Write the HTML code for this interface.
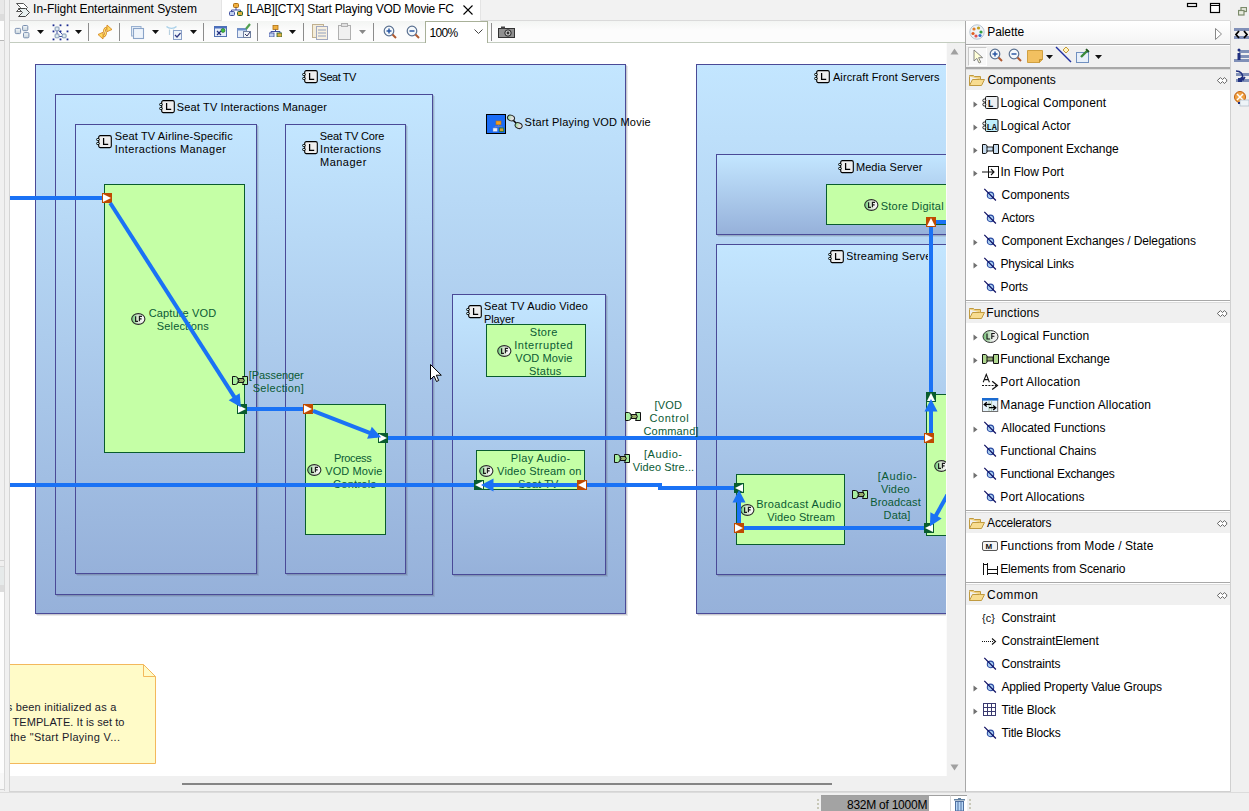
<!DOCTYPE html>
<html><head><meta charset="utf-8">
<style>
*{box-sizing:border-box;margin:0;padding:0}
html,body{width:1249px;height:811px;overflow:hidden;background:#f0f0f0;font-family:"Liberation Sans",sans-serif;font-size:12px;color:#000}
.a{position:absolute}
#canvas{position:absolute;left:0;top:0;width:946px;height:776px;overflow:hidden;clip-path:inset(43px 0 0 10px)}
#canvas .bg{position:absolute;left:10px;top:43px;width:937px;height:733px;background:#fff}
.cont{position:absolute;border:1px solid #4a4a97;background:linear-gradient(#c3e6ff,#96b1da);box-shadow:1px 1px 0 rgba(70,70,90,.2),2px 2px 0 rgba(70,70,90,.12)}
.fn{position:absolute;border:1px solid #095c2e;background:#c5ffa6}
.dt{position:absolute;white-space:nowrap;letter-spacing:-0.35px;line-height:13px;font-size:11px}
.pt{position:absolute;white-space:nowrap;line-height:23px}
</style></head><body>
<!-- left strip -->
<div class="a" style="left:0;top:0;width:4px;height:14px;background:#e8e8e8"></div>
<div class="a" style="left:0;top:14px;width:4px;height:7px;background:#dcdcdc"></div>
<div class="a" style="left:0;top:21px;width:4px;height:20px;background:#fdfdfd;border-bottom:1px solid #b8b8b8"></div>
<div class="a" style="left:0;top:560px;width:4px;height:1px;background:#d4d4d4"></div>
<div class="a" style="left:0;top:566px;width:4px;height:19px;background:#e6eaea;border-top:1px solid #d8d8d8"></div>
<div class="a" style="left:0;top:585px;width:4px;height:7px;background:#dcdcdc"></div>
<div class="a" style="left:0;top:592px;width:4px;height:181px;background:#fdfdfd"></div>
<div class="a" style="left:0;top:773px;width:4px;height:17px;background:#f8f8f8;border-bottom:1px solid #d4d4d4"></div>
<div class="a" style="left:4px;top:0;width:1px;height:791px;background:#d8d8d8"></div>
<div class="a" style="left:9px;top:0;width:1px;height:792px;background:#d4d4d4"></div>
<!-- tab bar -->
<div class="a" style="left:10px;top:0;width:1220px;height:20px;background:#f2f2f2"></div>
<div class="a" style="left:10px;top:20px;width:1220px;height:1px;background:#dadada"></div>
<!-- toolbar -->
<div class="a" style="left:10px;top:21px;width:955px;height:22px;background:linear-gradient(#f3f5f3,#fcfcfc 45%,#fcfcfc);border-bottom:1px solid #c3ccbf"></div>
<div id="canvas"><div class="bg"></div>
<div id="dia"><div class="cont" style="left:35px;top:64px;width:591px;height:550px;"></div><div class="cont" style="left:55px;top:94px;width:378px;height:501px;"></div><div class="cont" style="left:75px;top:124px;width:182px;height:450px;"></div><div class="cont" style="left:285px;top:124px;width:121px;height:450px;"></div><div class="cont" style="left:452px;top:294px;width:154px;height:281px;"></div><div class="cont" style="left:696px;top:64px;width:305px;height:550px;"></div><div class="cont" style="left:716px;top:154px;width:285px;height:81px;"></div><div class="cont" style="left:716px;top:244px;width:285px;height:331px;"></div><svg class="a" style="left:302px;top:70px" width="17" height="14" viewBox="0 0 17 14"><rect x="2.7" y="0.6" width="12.6" height="12" rx="1.6" fill="#eeeeee" stroke="#000" stroke-width="1.1"/><ellipse cx="1.9" cy="4.5" rx="1.5" ry="1.05" fill="#dff" stroke="#000" stroke-width="0.9"/><ellipse cx="1.9" cy="8.5" rx="1.5" ry="1.05" fill="#dff" stroke="#000" stroke-width="0.9"/><path d="M7.6 3v6.4h4.6" fill="none" stroke="#000" stroke-width="1.25"/></svg><svg class="a" style="left:159px;top:100px" width="17" height="14" viewBox="0 0 17 14"><rect x="2.7" y="0.6" width="12.6" height="12" rx="1.6" fill="#eeeeee" stroke="#000" stroke-width="1.1"/><ellipse cx="1.9" cy="4.5" rx="1.5" ry="1.05" fill="#dff" stroke="#000" stroke-width="0.9"/><ellipse cx="1.9" cy="8.5" rx="1.5" ry="1.05" fill="#dff" stroke="#000" stroke-width="0.9"/><path d="M7.6 3v6.4h4.6" fill="none" stroke="#000" stroke-width="1.25"/></svg><svg class="a" style="left:96px;top:135px" width="17" height="14" viewBox="0 0 17 14"><rect x="2.7" y="0.6" width="12.6" height="12" rx="1.6" fill="#eeeeee" stroke="#000" stroke-width="1.1"/><ellipse cx="1.9" cy="4.5" rx="1.5" ry="1.05" fill="#dff" stroke="#000" stroke-width="0.9"/><ellipse cx="1.9" cy="8.5" rx="1.5" ry="1.05" fill="#dff" stroke="#000" stroke-width="0.9"/><path d="M7.6 3v6.4h4.6" fill="none" stroke="#000" stroke-width="1.25"/></svg><svg class="a" style="left:302px;top:141px" width="17" height="14" viewBox="0 0 17 14"><rect x="2.7" y="0.6" width="12.6" height="12" rx="1.6" fill="#eeeeee" stroke="#000" stroke-width="1.1"/><ellipse cx="1.9" cy="4.5" rx="1.5" ry="1.05" fill="#dff" stroke="#000" stroke-width="0.9"/><ellipse cx="1.9" cy="8.5" rx="1.5" ry="1.05" fill="#dff" stroke="#000" stroke-width="0.9"/><path d="M7.6 3v6.4h4.6" fill="none" stroke="#000" stroke-width="1.25"/></svg><svg class="a" style="left:466px;top:305px" width="17" height="14" viewBox="0 0 17 14"><rect x="2.7" y="0.6" width="12.6" height="12" rx="1.6" fill="#eeeeee" stroke="#000" stroke-width="1.1"/><ellipse cx="1.9" cy="4.5" rx="1.5" ry="1.05" fill="#dff" stroke="#000" stroke-width="0.9"/><ellipse cx="1.9" cy="8.5" rx="1.5" ry="1.05" fill="#dff" stroke="#000" stroke-width="0.9"/><path d="M7.6 3v6.4h4.6" fill="none" stroke="#000" stroke-width="1.25"/></svg><svg class="a" style="left:814px;top:70px" width="17" height="14" viewBox="0 0 17 14"><rect x="2.7" y="0.6" width="12.6" height="12" rx="1.6" fill="#eeeeee" stroke="#000" stroke-width="1.1"/><ellipse cx="1.9" cy="4.5" rx="1.5" ry="1.05" fill="#dff" stroke="#000" stroke-width="0.9"/><ellipse cx="1.9" cy="8.5" rx="1.5" ry="1.05" fill="#dff" stroke="#000" stroke-width="0.9"/><path d="M7.6 3v6.4h4.6" fill="none" stroke="#000" stroke-width="1.25"/></svg><svg class="a" style="left:838px;top:160px" width="17" height="14" viewBox="0 0 17 14"><rect x="2.7" y="0.6" width="12.6" height="12" rx="1.6" fill="#eeeeee" stroke="#000" stroke-width="1.1"/><ellipse cx="1.9" cy="4.5" rx="1.5" ry="1.05" fill="#dff" stroke="#000" stroke-width="0.9"/><ellipse cx="1.9" cy="8.5" rx="1.5" ry="1.05" fill="#dff" stroke="#000" stroke-width="0.9"/><path d="M7.6 3v6.4h4.6" fill="none" stroke="#000" stroke-width="1.25"/></svg><svg class="a" style="left:828px;top:250px" width="17" height="14" viewBox="0 0 17 14"><rect x="2.7" y="0.6" width="12.6" height="12" rx="1.6" fill="#eeeeee" stroke="#000" stroke-width="1.1"/><ellipse cx="1.9" cy="4.5" rx="1.5" ry="1.05" fill="#dff" stroke="#000" stroke-width="0.9"/><ellipse cx="1.9" cy="8.5" rx="1.5" ry="1.05" fill="#dff" stroke="#000" stroke-width="0.9"/><path d="M7.6 3v6.4h4.6" fill="none" stroke="#000" stroke-width="1.25"/></svg><div class="fn" style="left:104px;top:184px;width:141px;height:269px;"></div><div class="fn" style="left:305px;top:404px;width:81px;height:131px;"></div><div class="fn" style="left:486px;top:324px;width:100px;height:53px;"></div><div class="fn" style="left:476px;top:450px;width:109px;height:40px;overflow:hidden"></div><div class="fn" style="left:826px;top:184px;width:175px;height:41px;"></div><div class="fn" style="left:736px;top:474px;width:109px;height:71px;"></div><div class="fn" style="left:926px;top:394px;width:75px;height:142px;"></div><svg class="a" style="left:130.6px;top:313px" width="16" height="13" viewBox="0 0 16 13"><defs><linearGradient id="lfg130313" x1="0" x2="1"><stop offset="0.15" stop-color="#88d890"/><stop offset=".45" stop-color="#d8e8d0"/><stop offset=".8" stop-color="#f4f4f4"/></linearGradient></defs><ellipse cx="7.3" cy="6" rx="6.6" ry="5.4" fill="url(#lfg130313)" stroke="#2a2a2a" stroke-width="1.1"/><path d="M4.6 3.3v5h2.4M8.4 8.3v-5h2.6M8.4 5.8h2.2" fill="none" stroke="#1a1a1a" stroke-width="1.15"/></svg><svg class="a" style="left:306.6px;top:464px" width="16" height="13" viewBox="0 0 16 13"><defs><linearGradient id="lfg306464" x1="0" x2="1"><stop offset="0.15" stop-color="#88d890"/><stop offset=".45" stop-color="#d8e8d0"/><stop offset=".8" stop-color="#f4f4f4"/></linearGradient></defs><ellipse cx="7.3" cy="6" rx="6.6" ry="5.4" fill="url(#lfg306464)" stroke="#2a2a2a" stroke-width="1.1"/><path d="M4.6 3.3v5h2.4M8.4 8.3v-5h2.6M8.4 5.8h2.2" fill="none" stroke="#1a1a1a" stroke-width="1.15"/></svg><svg class="a" style="left:496.6px;top:345px" width="16" height="13" viewBox="0 0 16 13"><defs><linearGradient id="lfg496345" x1="0" x2="1"><stop offset="0.15" stop-color="#88d890"/><stop offset=".45" stop-color="#d8e8d0"/><stop offset=".8" stop-color="#f4f4f4"/></linearGradient></defs><ellipse cx="7.3" cy="6" rx="6.6" ry="5.4" fill="url(#lfg496345)" stroke="#2a2a2a" stroke-width="1.1"/><path d="M4.6 3.3v5h2.4M8.4 8.3v-5h2.6M8.4 5.8h2.2" fill="none" stroke="#1a1a1a" stroke-width="1.15"/></svg><svg class="a" style="left:478.6px;top:465px" width="16" height="13" viewBox="0 0 16 13"><defs><linearGradient id="lfg478465" x1="0" x2="1"><stop offset="0.15" stop-color="#88d890"/><stop offset=".45" stop-color="#d8e8d0"/><stop offset=".8" stop-color="#f4f4f4"/></linearGradient></defs><ellipse cx="7.3" cy="6" rx="6.6" ry="5.4" fill="url(#lfg478465)" stroke="#2a2a2a" stroke-width="1.1"/><path d="M4.6 3.3v5h2.4M8.4 8.3v-5h2.6M8.4 5.8h2.2" fill="none" stroke="#1a1a1a" stroke-width="1.15"/></svg><svg class="a" style="left:863.5px;top:199px" width="16" height="13" viewBox="0 0 16 13"><defs><linearGradient id="lfg863199" x1="0" x2="1"><stop offset="0.15" stop-color="#88d890"/><stop offset=".45" stop-color="#d8e8d0"/><stop offset=".8" stop-color="#f4f4f4"/></linearGradient></defs><ellipse cx="7.3" cy="6" rx="6.6" ry="5.4" fill="url(#lfg863199)" stroke="#2a2a2a" stroke-width="1.1"/><path d="M4.6 3.3v5h2.4M8.4 8.3v-5h2.6M8.4 5.8h2.2" fill="none" stroke="#1a1a1a" stroke-width="1.15"/></svg><svg class="a" style="left:739.8px;top:503.8px" width="16" height="13" viewBox="0 0 16 13"><defs><linearGradient id="lfg739503" x1="0" x2="1"><stop offset="0.15" stop-color="#88d890"/><stop offset=".45" stop-color="#d8e8d0"/><stop offset=".8" stop-color="#f4f4f4"/></linearGradient></defs><ellipse cx="7.3" cy="6" rx="6.6" ry="5.4" fill="url(#lfg739503)" stroke="#2a2a2a" stroke-width="1.1"/><path d="M4.6 3.3v5h2.4M8.4 8.3v-5h2.6M8.4 5.8h2.2" fill="none" stroke="#1a1a1a" stroke-width="1.15"/></svg><svg class="a" style="left:934px;top:460px" width="16" height="13" viewBox="0 0 16 13"><defs><linearGradient id="lfg934460" x1="0" x2="1"><stop offset="0.15" stop-color="#88d890"/><stop offset=".45" stop-color="#d8e8d0"/><stop offset=".8" stop-color="#f4f4f4"/></linearGradient></defs><ellipse cx="7.3" cy="6" rx="6.6" ry="5.4" fill="url(#lfg934460)" stroke="#2a2a2a" stroke-width="1.1"/><path d="M4.6 3.3v5h2.4M8.4 8.3v-5h2.6M8.4 5.8h2.2" fill="none" stroke="#1a1a1a" stroke-width="1.15"/></svg><div class="dt" style="left:319.50px;top:71px;letter-spacing:-0.433px;color:#000">Seat TV</div><div class="dt" style="left:176.80px;top:101px;letter-spacing:0.152px;color:#000">Seat TV Interactions Manager</div><div class="dt" style="left:114.80px;top:130px;letter-spacing:0.135px;color:#000">Seat TV Airline-Specific</div><div class="dt" style="left:114.80px;top:143px;letter-spacing:0.405px;color:#000">Interactions Manager</div><div class="dt" style="left:319.80px;top:130px;letter-spacing:-0.164px;color:#000">Seat TV Core</div><div class="dt" style="left:320.00px;top:143px;letter-spacing:0.373px;color:#000">Interactions</div><div class="dt" style="left:320.00px;top:156px;letter-spacing:0.483px;color:#000">Manager</div><div class="dt" style="left:483.90px;top:300px;letter-spacing:0.161px;color:#000">Seat TV Audio Video</div><div class="dt" style="left:483.90px;top:313px;letter-spacing:-0.100px;color:#000">Player</div><div class="dt" style="left:832.90px;top:71px;letter-spacing:0.105px;color:#000">Aircraft Front Servers</div><div class="dt" style="left:855.90px;top:161px;letter-spacing:0.091px;color:#000">Media Server</div><div class="dt" style="left:524.60px;top:116px;letter-spacing:0.200px;color:#000">Start Playing VOD Movie</div><div class="dt" style="left:148.80px;top:307px;letter-spacing:0.130px;color:#0b5a34">Capture VOD</div><div class="dt" style="left:156.80px;top:320px;letter-spacing:0.144px;color:#0b5a34">Selections</div><div class="dt" style="left:333.90px;top:452px;letter-spacing:-0.317px;color:#0b5a34">Process</div><div class="dt" style="left:325.20px;top:465px;letter-spacing:0.113px;color:#0b5a34">VOD Movie</div><div class="dt" style="left:333.10px;top:478px;letter-spacing:0.271px;color:#0b5a34">Controls</div><div class="dt" style="left:529.80px;top:326px;letter-spacing:0.325px;color:#0b5a34">Store</div><div class="dt" style="left:514.20px;top:339px;letter-spacing:0.530px;color:#0b5a34">Interrupted</div><div class="dt" style="left:515.20px;top:352px;letter-spacing:0.112px;color:#0b5a34">VOD Movie</div><div class="dt" style="left:529.00px;top:365px;letter-spacing:0.220px;color:#0b5a34">Status</div><div class="dt" style="left:510.70px;top:452px;letter-spacing:0.390px;color:#0b5a34">Play Audio-</div><div class="dt" style="left:497.10px;top:465px;letter-spacing:0.179px;color:#0b5a34">Video Stream on</div><div class="dt" style="left:756.20px;top:498px;letter-spacing:0.336px;color:#0b5a34">Broadcast Audio</div><div class="dt" style="left:767.20px;top:511px;letter-spacing:0.118px;color:#0b5a34">Video Stream</div><div class="a" style="left:477px;top:451px;width:107px;height:38px;overflow:hidden"><div class="dt" style="left:40.90px;top:27px;letter-spacing:0.15px;color:#0b5a34">Seat TV</div></div><div class="a" style="left:847px;top:250px;width:81px;height:14px;overflow:hidden"><div class="dt" style="left:-1.00px;top:0px;letter-spacing:0.25px">Streaming Server</div></div><div class="dt" style="left:880.70px;top:200px;letter-spacing:0.25px;color:#0b5a34">Store Digital Content</div><div class="a" style="left:486px;top:114px;width:20px;height:20px;background:#1a6cf5;border:1px solid #000"></div><svg class="a" style="left:492px;top:120px" width="13" height="13" viewBox="0 0 13 13"><rect x="4" y="1" width="5" height="3.8" fill="#f0a020" stroke="#c07010" stroke-width=".6"/><path d="M6.5 5v1.5M3 6.5h7M3 6.5v1.5M10 6.5v1.5" stroke="#7080c0" stroke-width=".7"/><rect x="1" y="8" width="4.2" height="3.5" fill="#e8f0ff" stroke="#8090c0" stroke-width=".5"/><rect x="7.5" y="8" width="4.2" height="3.5" fill="#d0a030" stroke="#207040" stroke-width=".8"/></svg><svg class="a" style="left:506px;top:114px" width="17" height="16" viewBox="0 0 17 16"><path d="M5 4l7 7" stroke="#000" stroke-width="1.5"/><defs><linearGradient id="lkg" x1="0" x2="1"><stop offset="0" stop-color="#90e090"/><stop offset=".6" stop-color="#e0e0e0"/></linearGradient></defs><ellipse cx="5" cy="4" rx="3.6" ry="2.8" fill="url(#lkg)" stroke="#222" transform="rotate(20 5 4)"/><ellipse cx="12.6" cy="11.6" rx="3.6" ry="2.8" fill="url(#lkg)" stroke="#222" transform="rotate(20 12.6 11.6)"/></svg><svg class="a" style="left:0;top:660px" width="170" height="110" viewBox="0 0 170 110"><path d="M-10 4.5H143.5L155.5 16.5V103.5H-10Z" fill="#fffbc8" stroke="#f3b85c"/><path d="M143.5 4.5V16.5H155.5" fill="none" stroke="#f3b85c"/></svg><div class="dt" style="left:6.7px;top:701px;letter-spacing:0.2px;color:#1a1a2a">s been initialized as a</div><div class="dt" style="left:12.5px;top:716px;letter-spacing:0.07px;color:#1a1a2a">TEMPLATE. It is set to</div><div class="dt" style="left:10.2px;top:731px;letter-spacing:0.3px;color:#1a1a2a">the "Start Playing V...</div></div><svg class="a" style="left:0;top:0" width="947" height="776"><rect x="102" y="193" width="10" height="10" fill="#c04a00"/><polygon points="103,194 111,198 103,202" fill="#fff"/><rect x="237" y="404" width="10" height="10" fill="#095c2e"/><polygon points="238,405 246,409 238,413" fill="#fff"/><rect x="303" y="404" width="10" height="10" fill="#c04a00"/><polygon points="304,405 312,409 304,413" fill="#fff"/><rect x="378" y="433" width="10" height="10" fill="#095c2e"/><polygon points="379,434 387,438 379,442" fill="#fff"/><rect x="577" y="480" width="10" height="10" fill="#c04a00"/><polygon points="586,481 578,485 586,489" fill="#fff"/><rect x="474" y="480" width="10" height="10" fill="#095c2e"/><polygon points="483,481 475,485 483,489" fill="#fff"/><rect x="926" y="217" width="10" height="10" fill="#c04a00"/><polygon points="927,226 931,218 935,226" fill="#fff"/><rect x="926" y="392" width="10" height="10" fill="#095c2e"/><polygon points="927,401 931,393 935,401" fill="#fff"/><rect x="924" y="433" width="10" height="10" fill="#c04a00"/><polygon points="925,434 933,438 925,442" fill="#fff"/><rect x="924" y="523" width="10" height="10" fill="#095c2e"/><polygon points="933,524 925,528 933,532" fill="#fff"/><rect x="734" y="523" width="10" height="10" fill="#c04a00"/><polygon points="735,524 743,528 735,532" fill="#fff"/><rect x="734" y="483" width="10" height="10" fill="#095c2e"/><polygon points="743,484 735,488 743,492" fill="#fff"/><line x1="10" y1="198" x2="102" y2="198" stroke="#1a72f5" stroke-width="4"/><line x1="110.2" y1="203" x2="238.76635755863057" y2="403.9459366286745" stroke="#1a72f5" stroke-width="4"/><polygon points="240.9,407.3 228.7,400.3 239.7,393.3" fill="#1a72f5"/><line x1="247" y1="409" x2="303" y2="409" stroke="#1a72f5" stroke-width="4"/><line x1="313" y1="410.9" x2="377.403781489738" y2="435.83612884269866" stroke="#1a72f5" stroke-width="4"/><polygon points="381.1,437.3 367.1,438.8 371.8,426.7" fill="#1a72f5"/><line x1="388" y1="438" x2="924" y2="438" stroke="#1a72f5" stroke-width="4"/><line x1="931" y1="433" x2="931" y2="405" stroke="#1a72f5" stroke-width="4"/><polygon points="931.0,399.0 937.5,411.5 924.5,411.5" fill="#1a72f5"/><line x1="931" y1="392" x2="931" y2="227" stroke="#1a72f5" stroke-width="4"/><line x1="936" y1="222" x2="960" y2="222" stroke="#1a72f5" stroke-width="4"/><line x1="952.2885147170198" y1="486.02804409757454" x2="931.9110643396275" y2="522.7535055121969" stroke="#1a72f5" stroke-width="4"/><polygon points="930.0,526.3 930.4,512.2 941.7,518.5" fill="#1a72f5"/><line x1="744" y1="528" x2="924" y2="528" stroke="#1a72f5" stroke-width="4"/><line x1="739" y1="523" x2="739" y2="496" stroke="#1a72f5" stroke-width="4"/><polygon points="739.0,490.0 745.5,502.5 732.5,502.5" fill="#1a72f5"/><line x1="658" y1="488" x2="734" y2="488" stroke="#1a72f5" stroke-width="4"/><line x1="587" y1="485" x2="662" y2="485" stroke="#1a72f5" stroke-width="4"/><line x1="10" y1="485" x2="474" y2="485" stroke="#1a72f5" stroke-width="4"/><line x1="487" y1="485" x2="577" y2="485" stroke="#1a72f5" stroke-width="4"/><polygon points="481.0,485.0 493.5,478.5 493.5,491.5" fill="#1a72f5"/></svg><div class="dt" style="left:248.80px;top:369px;letter-spacing:-0.078px;color:#0b5a34">[Passenger</div><div class="dt" style="left:252.70px;top:382px;letter-spacing:0.300px;color:#0b5a34">Selection]</div><div class="dt" style="left:654.50px;top:399px;letter-spacing:0.200px;color:#0b5a34">[VOD</div><div class="dt" style="left:649.40px;top:412px;letter-spacing:0.633px;color:#0b5a34">Control</div><div class="dt" style="left:643.50px;top:425px;letter-spacing:0.171px;color:#0b5a34">Command]</div><div class="dt" style="left:644.00px;top:448px;letter-spacing:0.517px;color:#0b5a34">[Audio-</div><div class="dt" style="left:632.80px;top:461px;letter-spacing:0.083px;color:#0b5a34">Video Stre...</div><div class="dt" style="left:877.70px;top:470px;letter-spacing:0.683px;color:#0b5a34">[Audio-</div><div class="dt" style="left:880.90px;top:483px;letter-spacing:0.200px;color:#0b5a34">Video</div><div class="dt" style="left:870.30px;top:496px;letter-spacing:0.113px;color:#0b5a34">Broadcast</div><div class="dt" style="left:883.60px;top:509px;letter-spacing:0.125px;color:#0b5a34">Data]</div><svg class="a" style="left:232px;top:376px" width="16" height="9" viewBox="0 0 16 9"><path d="M6 2.5H11L12.5 4.5L11 6.5H6L7 4.5Z" fill="#9aad6a" stroke="#111" stroke-width="1"/><path d="M0.5 0.5H3.5Q6.3 0.5 6.3 4.5Q6.3 8.5 3.5 8.5H0.5Z" fill="#a8eea0" stroke="#111" stroke-width="1"/><path d="M10.5 0.5H15.5V8.5H10.5L12.3 4.5Z" fill="#a8eea0" stroke="#111" stroke-width="1"/></svg><svg class="a" style="left:625px;top:412px" width="16" height="9" viewBox="0 0 16 9"><path d="M6 2.5H11L12.5 4.5L11 6.5H6L7 4.5Z" fill="#9aad6a" stroke="#111" stroke-width="1"/><path d="M0.5 0.5H3.5Q6.3 0.5 6.3 4.5Q6.3 8.5 3.5 8.5H0.5Z" fill="#a8eea0" stroke="#111" stroke-width="1"/><path d="M10.5 0.5H15.5V8.5H10.5L12.3 4.5Z" fill="#a8eea0" stroke="#111" stroke-width="1"/></svg><svg class="a" style="left:614px;top:454px" width="16" height="9" viewBox="0 0 16 9"><path d="M6 2.5H11L12.5 4.5L11 6.5H6L7 4.5Z" fill="#9aad6a" stroke="#111" stroke-width="1"/><path d="M0.5 0.5H3.5Q6.3 0.5 6.3 4.5Q6.3 8.5 3.5 8.5H0.5Z" fill="#a8eea0" stroke="#111" stroke-width="1"/><path d="M10.5 0.5H15.5V8.5H10.5L12.3 4.5Z" fill="#a8eea0" stroke="#111" stroke-width="1"/></svg><svg class="a" style="left:852px;top:490px" width="16" height="9" viewBox="0 0 16 9"><path d="M6 2.5H11L12.5 4.5L11 6.5H6L7 4.5Z" fill="#9aad6a" stroke="#111" stroke-width="1"/><path d="M0.5 0.5H3.5Q6.3 0.5 6.3 4.5Q6.3 8.5 3.5 8.5H0.5Z" fill="#a8eea0" stroke="#111" stroke-width="1"/><path d="M10.5 0.5H15.5V8.5H10.5L12.3 4.5Z" fill="#a8eea0" stroke="#111" stroke-width="1"/></svg><svg class="a" style="left:429px;top:363px" width="14" height="20" viewBox="0 0 14 20"><path d="M1.5 1.5v15l3.5-3.5 2.5 5.5 2.2-1-2.4-5.3h5z" fill="#fff" stroke="#000" stroke-width="1"/></svg>
</div>
<!-- vertical scrollbar -->
<div class="a" style="left:946px;top:43px;width:1px;height:733px;background:#fbfbfb"></div>
<div class="a" style="left:947px;top:43px;width:18px;height:733px;background:#f0f0f0"></div>
<!-- horizontal scrollbar -->
<div class="a" style="left:10px;top:776px;width:955px;height:16px;background:#f0f0f0;border-bottom:1px solid #d4d4d4"></div>
<!-- palette -->
<div class="a" style="left:965px;top:21px;width:266px;height:771px;background:#fff"></div>
<div class="a" style="left:222px;top:0;width:258px;height:21px;background:#fff"></div><div class="a" style="left:221px;top:0;width:1px;height:21px;background:#e4e4e4"></div><div class="a" style="left:480px;top:0;width:1px;height:21px;background:#e4e4e4"></div><svg class="a" style="left:15px;top:2px" width="16" height="15" viewBox="0 0 16 15"><path d="M1.5 1.5h7l4 4-4 4h-7l4-4z" fill="#fff" stroke="#555" stroke-width="1"/><path d="M3.5 6.5h7l4 4-4 4h-7l4-4z" fill="#e8f0f0" stroke="#444" stroke-width="1"/></svg><div class="a" style="left:33.10px;top:2px;line-height:14px;white-space:nowrap;letter-spacing:-0.028px;color:#000;font-size:12px">In-Flight Entertainment System</div><svg class="a" style="left:229px;top:3px" width="14" height="13" viewBox="0 0 14 13"><rect x="4.5" y="0.5" width="5" height="4" rx="1" fill="#f0b040" stroke="#b07010"/><path d="M7 4.5v2.5M2.5 7h9M2.5 7v2M11.5 7v2" fill="none" stroke="#4050a0"/><rect x="0.5" y="8.5" width="5" height="4" rx="1" fill="#c0d0f0" stroke="#4050a0"/><rect x="8.5" y="8.5" width="5" height="4" rx="1" fill="#e0b040" stroke="#206030"/></svg><div class="a" style="left:246.40px;top:2px;line-height:14px;white-space:nowrap;letter-spacing:-0.217px;color:#000;font-size:12px">[LAB][CTX] Start Playing VOD Movie FC</div><svg class="a" style="left:462px;top:4px" width="12" height="12" viewBox="0 0 12 12"><path d="M1.5 1.5l9 9M10.5 1.5l-9 9" stroke="#000" stroke-width="1.1"/></svg><svg class="a" style="left:1186px;top:2px" width="12" height="7" viewBox="0 0 12 7"><rect x="1.5" y="1.5" width="9" height="3" fill="#fff" stroke="#000" stroke-width="1.2"/></svg><svg class="a" style="left:1209px;top:2px" width="12" height="12" viewBox="0 0 12 12"><rect x="1.5" y="1.5" width="9" height="9" fill="#fff" stroke="#000" stroke-width="1.2"/><path d="M1.5 3.5h9" stroke="#000"/></svg><svg class="a" style="left:1238px;top:7px" width="9" height="9" viewBox="0 0 9 9"><rect x="3" y="0.5" width="5.5" height="4" fill="#e8ece0" stroke="#7a8a6a" stroke-width="1.2"/><rect x="0.5" y="3.5" width="5.5" height="4.5" fill="#e8ece0" stroke="#7a8a6a" stroke-width="1.2"/></svg><svg class="a" style="left:14px;top:24px" width="16" height="15" viewBox="0 0 16 15"><defs><linearGradient id="tbg" x1="0" y1="0" x2="0" y2="1"><stop offset="0" stop-color="#f4f8fb"/><stop offset="1" stop-color="#c8d4dc"/></linearGradient></defs><rect x="1.2" y="4.4" width="5.4" height="5.2" rx="1" fill="url(#tbg)" stroke="#7a90b0" stroke-width="1"/><rect x="8.6" y="1.5" width="5.2" height="5.2" rx="1" fill="url(#tbg)" stroke="#7a90b0" stroke-width="1"/><rect x="9.5" y="8.6" width="5.4" height="5.2" rx="1" fill="url(#tbg)" stroke="#7a90b0" stroke-width="1"/></svg><svg class="a" style="left:37px;top:30px" width="8" height="5" viewBox="0 0 8 5"><path d="M0 0h7l-3.5 4z" fill="#111"/></svg><svg class="a" style="left:51.5px;top:23.5px" width="17" height="17" viewBox="0 0 17 17"><path d="M5 5l7.5 7.5M5 5v7.5h7.5" stroke="#3040a0" stroke-width=".9" fill="none"/><rect x="0.6" y="0.4" width="1.8" height="1.8" fill="#1a2a90"/><rect x="0.6" y="6.5" width="1.8" height="1.8" fill="#1a2a90"/><rect x="0.6" y="14.5" width="1.8" height="1.8" fill="#1a2a90"/><rect x="7.6" y="0.4" width="1.8" height="1.8" fill="#1a2a90"/><rect x="7.6" y="6.5" width="1.8" height="1.8" fill="#1a2a90"/><rect x="7.6" y="14.5" width="1.8" height="1.8" fill="#1a2a90"/><rect x="14.6" y="0.4" width="1.8" height="1.8" fill="#1a2a90"/><rect x="14.6" y="6.5" width="1.8" height="1.8" fill="#1a2a90"/><rect x="14.6" y="14.5" width="1.8" height="1.8" fill="#1a2a90"/><rect x="3.1" y="3" width="3.9" height="3.8" rx=".8" fill="#dde8ee" stroke="#7890b0" stroke-width=".9"/><rect x="3.1" y="10" width="3.9" height="3.8" rx=".8" fill="#dde8ee" stroke="#7890b0" stroke-width=".9"/><rect x="10.2" y="10" width="3.9" height="3.8" rx=".8" fill="#dde8ee" stroke="#7890b0" stroke-width=".9"/></svg><svg class="a" style="left:75px;top:30px" width="8" height="5" viewBox="0 0 8 5"><path d="M0 0h7l-3.5 4z" fill="#111"/></svg><div class="a" style="left:88px;top:23px;width:1px;height:18px;background:#8c8c8c"></div><svg class="a" style="left:97px;top:24px" width="16" height="16" viewBox="0 0 16 16"><path d="M7.5 8C7 5.5 8.5 3.5 11 3.8" fill="none" stroke="#d08018" stroke-width="2.6"/><path d="M7.5 8C7 5.5 8.5 3.5 11 3.8" fill="none" stroke="#ffe070" stroke-width="1.1"/><path d="M10 1L15 5.5L9.8 7.8Z" fill="#ffd860" stroke="#d08018" stroke-width=".8"/><path d="M8.5 8C9 10.5 7.5 12.5 5 12.2" fill="none" stroke="#d08018" stroke-width="2.6"/><path d="M8.5 8C9 10.5 7.5 12.5 5 12.2" fill="none" stroke="#ffe070" stroke-width="1.1"/><path d="M6 15L1 10.5L6.2 8.2Z" fill="#ffd860" stroke="#d08018" stroke-width=".8"/></svg><div class="a" style="left:119px;top:23px;width:1px;height:18px;background:#8c8c8c"></div><svg class="a" style="left:130px;top:25px" width="15" height="15" viewBox="0 0 15 15"><rect x="1.5" y="1.5" width="9.5" height="9.5" fill="#e4eef8" stroke="#98b0d0"/><rect x="3.5" y="3.5" width="10" height="10" fill="#eef4fb" stroke="#8aa4c8" stroke-width="1.1"/></svg><svg class="a" style="left:152px;top:30px" width="8" height="5" viewBox="0 0 8 5"><path d="M0 0h7l-3.5 4z" fill="#111"/></svg><svg class="a" style="left:166px;top:25px" width="18" height="16" viewBox="0 0 18 16"><path d="M0.5 1.5C3 4 8 4 10.5 1.5" fill="none" stroke="#a8d0e8" stroke-width="1.4"/><path d="M3.5 4.5V10M7.5 4.5V10" stroke="#b8d0e0" stroke-width="1.2"/><rect x="7.5" y="5.5" width="8" height="9" fill="#eef4fa" stroke="#8aa0c8"/><path d="M9 10l2 2 3.5-4" fill="none" stroke="#303880" stroke-width="1.2"/></svg><svg class="a" style="left:190px;top:30px" width="8" height="5" viewBox="0 0 8 5"><path d="M0 0h7l-3.5 4z" fill="#111"/></svg><div class="a" style="left:203px;top:23px;width:1px;height:18px;background:#8c8c8c"></div><svg class="a" style="left:214px;top:26px" width="13" height="11" viewBox="0 0 13 11"><rect x="0.5" y="0.5" width="12" height="10" fill="#e8eef8" stroke="#5070b0"/><rect x="0.5" y="0.5" width="12" height="2" fill="#4a70c0"/><circle cx="9" cy="4.5" r="2" fill="#40c040" stroke="#206020" stroke-width=".6"/><path d="M3 5l4 4M7 5l-4 4" stroke="#203080" stroke-width="1.2"/></svg><svg class="a" style="left:237px;top:23px" width="15" height="16" viewBox="0 0 15 16"><rect x="0.5" y="5.5" width="9" height="9" fill="#e8eef8" stroke="#7890c0"/><rect x="0.5" y="5.5" width="9" height="2" fill="#6a90d0"/><rect x="6.5" y="8.5" width="7" height="6" fill="#f0f4f8" stroke="#7080a0"/><path d="M8 11l2 2 3-4" fill="none" stroke="#303060"/><path d="M9 6l4-5" stroke="#50a050" stroke-width="2.2"/></svg><div class="a" style="left:257px;top:23px;width:1px;height:18px;background:#8c8c8c"></div><svg class="a" style="left:269px;top:25px" width="13" height="12" viewBox="0 0 13 12"><rect x="4" y="0.5" width="5" height="4" fill="#f0b040" stroke="#b07010" stroke-width=".8"/><path d="M6.5 4.5v2M2 6.5h9M2 6.5v2M11 6.5v2" fill="none" stroke="#4050a0"/><rect x="0" y="8" width="5" height="4" fill="#c0d0f0" stroke="#4050a0" stroke-width=".8"/><rect x="8" y="8" width="5" height="4" fill="#e0b040" stroke="#206030" stroke-width=".8"/></svg><svg class="a" style="left:289px;top:30px" width="8" height="5" viewBox="0 0 8 5"><path d="M0 0h7l-3.5 4z" fill="#111"/></svg><div class="a" style="left:303px;top:23px;width:1px;height:18px;background:#8c8c8c"></div><svg class="a" style="left:312px;top:24px" width="16" height="16" viewBox="0 0 16 16"><rect x="0.5" y="0.5" width="11" height="13" fill="#f4ecd8" stroke="#c0b090"/><rect x="4.5" y="2.5" width="11" height="13" fill="#f8f0e0" stroke="#a0a8c0"/><path d="M6 6h8M6 9h8M6 12h8" stroke="#90a0c0"/></svg><svg class="a" style="left:338px;top:23px" width="14" height="17" viewBox="0 0 14 17"><rect x="0.5" y="2.5" width="12" height="14" fill="#f0f0f0" stroke="#b0b0b0"/><rect x="3.5" y="0.5" width="6" height="3" fill="#e0e0e0" stroke="#b0b0b0"/></svg><svg class="a" style="left:359px;top:30px" width="8" height="5" viewBox="0 0 8 5"><path d="M0 0h7l-3.5 4z" fill="#888"/></svg><div class="a" style="left:373px;top:23px;width:1px;height:18px;background:#8c8c8c"></div><svg class="a" style="left:383px;top:25px" width="14" height="14" viewBox="0 0 14 14"><circle cx="6" cy="6" r="4.8" fill="#f4f8fb" stroke="#5a7090" stroke-width="1.2"/><path d="M9.5 9.5l3.5 3.5" stroke="#b05a30" stroke-width="2"/><path d="M3.5 6h5" stroke="#2050a0" stroke-width="1.4"/><path d="M6 3.5v5" stroke="#2050a0" stroke-width="1.4"/></svg><svg class="a" style="left:406px;top:25px" width="14" height="14" viewBox="0 0 14 14"><circle cx="6" cy="6" r="4.8" fill="#f4f8fb" stroke="#5a7090" stroke-width="1.2"/><path d="M9.5 9.5l3.5 3.5" stroke="#b05a30" stroke-width="2"/><path d="M3.5 6h5" stroke="#2050a0" stroke-width="1.4"/></svg><div class="a" style="left:425px;top:21px;width:63px;height:22px;background:#fff;border:1px solid #a8b098;border-bottom:none"></div><div class="a" style="left:429.60px;top:26px;line-height:14px;white-space:nowrap;letter-spacing:-0.700px;color:#000;font-size:12px">100%</div><svg class="a" style="left:474px;top:29px" width="10" height="6" viewBox="0 0 10 6"><path d="M0.5 0.5l4 4 4-4" fill="none" stroke="#444"/></svg><div class="a" style="left:491px;top:23px;width:1px;height:18px;background:#8c8c8c"></div><svg class="a" style="left:498px;top:26px" width="17" height="12" viewBox="0 0 17 12"><rect x="0.5" y="2.5" width="16" height="9" fill="#909090" stroke="#333"/><rect x="3" y="0.5" width="4" height="2" fill="#444"/><circle cx="10" cy="7" r="3.2" fill="#c8c8c8" stroke="#222"/><circle cx="10" cy="7" r="1.4" fill="#333"/></svg><div class="a" style="left:965px;top:21px;width:1px;height:771px;background:#a8a8a8"></div><div class="a" style="left:966px;top:21px;width:264px;height:24px;background:linear-gradient(#fff,#f4f4f4);border-bottom:1px solid #a8a8a8"></div><svg class="a" style="left:969px;top:24px" width="16" height="16" viewBox="0 0 16 16"><circle cx="8" cy="8" r="7.2" fill="#eef3f8" stroke="#b8c4d0"/><circle cx="5" cy="5" r="1.6" fill="#e08030"/><circle cx="9.5" cy="4" r="1.6" fill="#c0a020"/><circle cx="12" cy="8" r="1.6" fill="#30a040"/><circle cx="4" cy="9.5" r="1.6" fill="#e06020"/><circle cx="7" cy="12" r="1.6" fill="#e05050"/><circle cx="11" cy="11.5" r="1.6" fill="#3070d0"/></svg><div class="a" style="left:987.30px;top:25px;line-height:14px;white-space:nowrap;letter-spacing:-0.100px;color:#000;font-size:12px">Palette</div><svg class="a" style="left:1214px;top:27px" width="9" height="14" viewBox="0 0 9 14"><path d="M1.5 1.5l6 5.5-6 5.5z" fill="#fff" stroke="#888"/></svg><div class="a" style="left:966px;top:45px;width:264px;height:24px;background:#f0f0f0;border-top:1px solid #fff;border-bottom:1px solid #a8a8a8"></div><div class="a" style="left:968px;top:47px;width:19px;height:19px;background:#f8f8f8;border:1px solid #c8c8c8;border-right-color:#fff;border-bottom-color:#fff"></div><svg class="a" style="left:973px;top:49px" width="10" height="15" viewBox="0 0 10 15"><path d="M1 1v11l2.8-2.6 2.2 4.6 1.8-.8-2.2-4.5h4z" fill="#ffffd8" stroke="#777" stroke-width=".9"/></svg><svg class="a" style="left:989px;top:48px" width="14" height="14" viewBox="0 0 14 14"><circle cx="6" cy="6" r="4.8" fill="#f4f8fb" stroke="#5a7090" stroke-width="1.2"/><path d="M9.5 9.5l3.5 3.5" stroke="#b05a30" stroke-width="2"/><path d="M3.5 6h5" stroke="#2050a0" stroke-width="1.4"/><path d="M6 3.5v5" stroke="#2050a0" stroke-width="1.4"/></svg><svg class="a" style="left:1008px;top:48px" width="14" height="14" viewBox="0 0 14 14"><circle cx="6" cy="6" r="4.8" fill="#f4f8fb" stroke="#5a7090" stroke-width="1.2"/><path d="M9.5 9.5l3.5 3.5" stroke="#b05a30" stroke-width="2"/><path d="M3.5 6h5" stroke="#2050a0" stroke-width="1.4"/></svg><svg class="a" style="left:1027px;top:50px" width="16" height="13" viewBox="0 0 16 13"><path d="M0.5 0.5h15v9l-3 3h-12z" fill="#f2c060" stroke="#d0a040"/><path d="M12.5 12.5v-3h3" fill="#e0b050" stroke="#c09030"/></svg><svg class="a" style="left:1046px;top:55px" width="8" height="5" viewBox="0 0 8 5"><path d="M0 0h7l-3.5 4z" fill="#111"/></svg><svg class="a" style="left:1055px;top:46px" width="17" height="17" viewBox="0 0 17 17"><path d="M1 1l15 15" stroke="#2030a0" stroke-width="1.4"/><path d="M11 1l3 3-3 3-3-3z" fill="#fff4c0" stroke="#c09020" stroke-width=".9"/></svg><svg class="a" style="left:1076px;top:47px" width="15" height="16" viewBox="0 0 15 16"><rect x="0.5" y="5.5" width="12" height="10" fill="#e8f0fa" stroke="#7090c0"/><path d="M5 10l7-7" stroke="#3a8a3a" stroke-width="2.4"/><path d="M10 2l3 3" stroke="#205020" stroke-width="1.6"/></svg><svg class="a" style="left:1095px;top:55px" width="8" height="5" viewBox="0 0 8 5"><path d="M0 0h7l-3.5 4z" fill="#111"/></svg><div class="a" style="left:966px;top:67px;width:264px;height:1px;background:#a8a8a8"></div><div class="a" style="left:966px;top:69px;width:264px;height:21px;background:#f0f0f0;border-top:1px solid #dcdcdc"></div><svg class="a" style="left:969px;top:74px" width="16" height="13" viewBox="0 0 16 13"><path d="M0.5 2.5v9h12l3-6h-12l-3 6" fill="#f8dc90" stroke="#c09a40"/><path d="M0.5 2.5v-1h4l1 1h6v3" fill="#f0d080" stroke="#c09a40"/></svg><div class="a" style="left:987.60px;top:73px;line-height:14px;white-space:nowrap;letter-spacing:0.011px;color:#000;font-size:12px">Components</div><svg class="a" style="left:1216px;top:77px" width="12" height="8" viewBox="0 0 12 8"><path d="M1.3 3.5L4.5 0.6L6.5 2.6L8.4 0.6L10.7 2.7V4.3L8.4 6.5L6.5 4.5L4.5 6.5Z" fill="#fff" stroke="#666" stroke-width="1"/></svg><svg class="a" style="left:973px;top:100px" width="5" height="8" viewBox="0 0 5 8"><path d="M0.5 1.5l4 3-4 3z" fill="#707070"/></svg><svg class="a" style="left:982px;top:96px" width="17" height="14" viewBox="0 0 17 14"><rect x="3.5" y="0.5" width="12.5" height="12" rx="1.2" fill="#eceff2" stroke="#111"/><circle cx="2.3" cy="4.5" r="1.5" fill="#fff" stroke="#111" stroke-width=".9"/><circle cx="2.3" cy="8.5" r="1.5" fill="#fff" stroke="#111" stroke-width=".9"/><text x="5.5" y="10.5" font-family="Liberation Mono" font-size="10" font-weight="bold" fill="#111">L</text></svg><div class="a" style="left:1000.50px;top:96px;line-height:14px;white-space:nowrap;letter-spacing:0.138px;color:#000;font-size:12px">Logical Component</div><svg class="a" style="left:973px;top:123px" width="5" height="8" viewBox="0 0 5 8"><path d="M0.5 1.5l4 3-4 3z" fill="#707070"/></svg><svg class="a" style="left:982px;top:119px" width="17" height="14" viewBox="0 0 17 14"><rect x="3.5" y="0.5" width="12.5" height="12" rx="1.2" fill="#bfeffc" stroke="#111"/><circle cx="2.3" cy="4.5" r="1.5" fill="#fff" stroke="#111" stroke-width=".9"/><circle cx="2.3" cy="8.5" r="1.5" fill="#fff" stroke="#111" stroke-width=".9"/><text x="4.6" y="10.5" font-family="Liberation Mono" font-size="8.5" font-weight="bold" fill="#111">LA</text></svg><div class="a" style="left:1000.50px;top:119px;line-height:14px;white-space:nowrap;letter-spacing:0.108px;color:#000;font-size:12px">Logical Actor</div><svg class="a" style="left:973px;top:146px" width="5" height="8" viewBox="0 0 5 8"><path d="M0.5 1.5l4 3-4 3z" fill="#707070"/></svg><svg class="a" style="left:982px;top:142px" width="17" height="14" viewBox="0 0 17 14"><path d="M0.5 2.5h3q2 0 2 4.5t-2 4.5h-3z" fill="#c8ddf0" stroke="#111"/><rect x="5" y="5" width="6" height="4" fill="#c8ddf0" stroke="#111" stroke-width=".9"/><path d="M11.5 2.5h5v9h-5z" fill="#c8ddf0" stroke="#111"/></svg><div class="a" style="left:1001.50px;top:142px;line-height:14px;white-space:nowrap;letter-spacing:-0.094px;color:#000;font-size:12px">Component Exchange</div><svg class="a" style="left:973px;top:169px" width="5" height="8" viewBox="0 0 5 8"><path d="M0.5 1.5l4 3-4 3z" fill="#707070"/></svg><svg class="a" style="left:982px;top:165px" width="17" height="14" viewBox="0 0 17 14"><rect x="6.5" y="1.5" width="10" height="11" fill="#fff" stroke="#111"/><path d="M0 7h12M9 4l3 3-3 3" fill="none" stroke="#111" stroke-width="1.1"/></svg><div class="a" style="left:1000.50px;top:165px;line-height:14px;white-space:nowrap;letter-spacing:-0.064px;color:#000;font-size:12px">In Flow Port</div><svg class="a" style="left:982px;top:188px" width="17" height="14" viewBox="0 0 17 14"><ellipse cx="8.5" cy="7.4" rx="3.2" ry="3.3" fill="#a8ccf0" stroke="#2a48a0" stroke-width="1.1"/><path d="M2.3 0.9L13.9 12.5" stroke="#0c0c60" stroke-width="1.2"/></svg><div class="a" style="left:1001.50px;top:188px;line-height:14px;white-space:nowrap;letter-spacing:0.000px;color:#000;font-size:12px">Components</div><svg class="a" style="left:982px;top:211px" width="17" height="14" viewBox="0 0 17 14"><ellipse cx="8.5" cy="7.4" rx="3.2" ry="3.3" fill="#a8ccf0" stroke="#2a48a0" stroke-width="1.1"/><path d="M2.3 0.9L13.9 12.5" stroke="#0c0c60" stroke-width="1.2"/></svg><div class="a" style="left:1001.50px;top:211px;line-height:14px;white-space:nowrap;letter-spacing:-0.180px;color:#000;font-size:12px">Actors</div><svg class="a" style="left:973px;top:238px" width="5" height="8" viewBox="0 0 5 8"><path d="M0.5 1.5l4 3-4 3z" fill="#707070"/></svg><svg class="a" style="left:982px;top:234px" width="17" height="14" viewBox="0 0 17 14"><ellipse cx="8.5" cy="7.4" rx="3.2" ry="3.3" fill="#a8ccf0" stroke="#2a48a0" stroke-width="1.1"/><path d="M2.3 0.9L13.9 12.5" stroke="#0c0c60" stroke-width="1.2"/></svg><div class="a" style="left:1001.50px;top:234px;line-height:14px;white-space:nowrap;letter-spacing:-0.116px;color:#000;font-size:12px">Component Exchanges / Delegations</div><svg class="a" style="left:973px;top:261px" width="5" height="8" viewBox="0 0 5 8"><path d="M0.5 1.5l4 3-4 3z" fill="#707070"/></svg><svg class="a" style="left:982px;top:257px" width="17" height="14" viewBox="0 0 17 14"><ellipse cx="8.5" cy="7.4" rx="3.2" ry="3.3" fill="#a8ccf0" stroke="#2a48a0" stroke-width="1.1"/><path d="M2.3 0.9L13.9 12.5" stroke="#0c0c60" stroke-width="1.2"/></svg><div class="a" style="left:1000.50px;top:257px;line-height:14px;white-space:nowrap;letter-spacing:-0.200px;color:#000;font-size:12px">Physical Links</div><svg class="a" style="left:982px;top:280px" width="17" height="14" viewBox="0 0 17 14"><ellipse cx="8.5" cy="7.4" rx="3.2" ry="3.3" fill="#a8ccf0" stroke="#2a48a0" stroke-width="1.1"/><path d="M2.3 0.9L13.9 12.5" stroke="#0c0c60" stroke-width="1.2"/></svg><div class="a" style="left:1000.50px;top:280px;line-height:14px;white-space:nowrap;letter-spacing:-0.100px;color:#000;font-size:12px">Ports</div><div class="a" style="left:966px;top:300px;width:264px;height:1px;background:#a8a8a8"></div><div class="a" style="left:966px;top:302px;width:264px;height:21px;background:#f0f0f0;border-top:1px solid #dcdcdc"></div><svg class="a" style="left:969px;top:307px" width="16" height="13" viewBox="0 0 16 13"><path d="M0.5 2.5v9h12l3-6h-12l-3 6" fill="#f8dc90" stroke="#c09a40"/><path d="M0.5 2.5v-1h4l1 1h6v3" fill="#f0d080" stroke="#c09a40"/></svg><div class="a" style="left:986.20px;top:306px;line-height:14px;white-space:nowrap;letter-spacing:0.137px;color:#000;font-size:12px">Functions</div><svg class="a" style="left:1216px;top:310px" width="12" height="8" viewBox="0 0 12 8"><path d="M1.3 3.5L4.5 0.6L6.5 2.6L8.4 0.6L10.7 2.7V4.3L8.4 6.5L6.5 4.5L4.5 6.5Z" fill="#fff" stroke="#666" stroke-width="1"/></svg><svg class="a" style="left:973px;top:333px" width="5" height="8" viewBox="0 0 5 8"><path d="M0.5 1.5l4 3-4 3z" fill="#707070"/></svg><svg class="a" style="left:982px;top:329px" width="17" height="14" viewBox="0 0 17 14"><defs><linearGradient id="plf" x1="0" x2="1"><stop offset="0" stop-color="#70c070"/><stop offset=".65" stop-color="#eee"/></linearGradient></defs><ellipse cx="8.5" cy="7.5" rx="7.5" ry="6" fill="url(#plf)" stroke="#333"/><path d="M5 4.5v5.5h3M9.8 10v-5.5h3M9.8 7.2h2.6" fill="none" stroke="#111" stroke-width="1.1"/></svg><div class="a" style="left:1000.30px;top:329px;line-height:14px;white-space:nowrap;letter-spacing:0.093px;color:#000;font-size:12px">Logical Function</div><svg class="a" style="left:973px;top:356px" width="5" height="8" viewBox="0 0 5 8"><path d="M0.5 1.5l4 3-4 3z" fill="#707070"/></svg><svg class="a" style="left:982px;top:352px" width="17" height="14" viewBox="0 0 17 14"><path d="M0.5 2.5h3q2 0 2 4.5t-2 4.5h-3z" fill="#b0d890" stroke="#111"/><rect x="5" y="5" width="6" height="4" fill="#90a870" stroke="#111" stroke-width=".9"/><path d="M11.5 2.5h5v9h-5z" fill="#b0d890" stroke="#111"/></svg><div class="a" style="left:1000.30px;top:352px;line-height:14px;white-space:nowrap;letter-spacing:-0.139px;color:#000;font-size:12px">Functional Exchange</div><svg class="a" style="left:982px;top:373px" width="17" height="18" viewBox="0 0 17 18"><path d="M1.2 9.2L4.3 1.4L7.4 9.2M2.3 6.6H6.3" fill="none" stroke="#111" stroke-width="1.1"/><path d="M0 12.5H14" stroke="#111" stroke-width="1.1" stroke-dasharray="2 1.2"/><path d="M10.2 8.2L15.4 12.4L10.2 16.5" fill="none" stroke="#111" stroke-width="1.3"/></svg><div class="a" style="left:1000.30px;top:375px;line-height:14px;white-space:nowrap;letter-spacing:0.221px;color:#000;font-size:12px">Port Allocation</div><svg class="a" style="left:982px;top:398px" width="17" height="14" viewBox="0 0 17 14"><rect x="0.5" y="0.5" width="15.2" height="13" fill="#e4f2fc" stroke="#707070"/><rect x="0" y="0" width="16.2" height="2.6" fill="#1a6ad0"/><path d="M7 2.6V13M9.6 2.6V13" stroke="#a8c0a0" stroke-width="0.9"/><path d="M2.5 6.4H9M4.8 4.2L2.2 6.4L4.8 8.6M7 9.7H13.5M11.2 7.5L13.8 9.7L11.2 11.9" fill="none" stroke="#000" stroke-width="1.3"/></svg><div class="a" style="left:1000.30px;top:398px;line-height:14px;white-space:nowrap;letter-spacing:0.128px;color:#000;font-size:12px">Manage Function Allocation</div><svg class="a" style="left:973px;top:425px" width="5" height="8" viewBox="0 0 5 8"><path d="M0.5 1.5l4 3-4 3z" fill="#707070"/></svg><svg class="a" style="left:982px;top:421px" width="17" height="14" viewBox="0 0 17 14"><ellipse cx="8.5" cy="7.4" rx="3.2" ry="3.3" fill="#a8ccf0" stroke="#2a48a0" stroke-width="1.1"/><path d="M2.3 0.9L13.9 12.5" stroke="#0c0c60" stroke-width="1.2"/></svg><div class="a" style="left:1001.30px;top:421px;line-height:14px;white-space:nowrap;letter-spacing:-0.028px;color:#000;font-size:12px">Allocated Functions</div><svg class="a" style="left:982px;top:444px" width="17" height="14" viewBox="0 0 17 14"><ellipse cx="8.5" cy="7.4" rx="3.2" ry="3.3" fill="#a8ccf0" stroke="#2a48a0" stroke-width="1.1"/><path d="M2.3 0.9L13.9 12.5" stroke="#0c0c60" stroke-width="1.2"/></svg><div class="a" style="left:1000.30px;top:444px;line-height:14px;white-space:nowrap;letter-spacing:0.000px;color:#000;font-size:12px">Functional Chains</div><svg class="a" style="left:973px;top:471px" width="5" height="8" viewBox="0 0 5 8"><path d="M0.5 1.5l4 3-4 3z" fill="#707070"/></svg><svg class="a" style="left:982px;top:467px" width="17" height="14" viewBox="0 0 17 14"><ellipse cx="8.5" cy="7.4" rx="3.2" ry="3.3" fill="#a8ccf0" stroke="#2a48a0" stroke-width="1.1"/><path d="M2.3 0.9L13.9 12.5" stroke="#0c0c60" stroke-width="1.2"/></svg><div class="a" style="left:1000.30px;top:467px;line-height:14px;white-space:nowrap;letter-spacing:-0.189px;color:#000;font-size:12px">Functional Exchanges</div><svg class="a" style="left:982px;top:490px" width="17" height="14" viewBox="0 0 17 14"><ellipse cx="8.5" cy="7.4" rx="3.2" ry="3.3" fill="#a8ccf0" stroke="#2a48a0" stroke-width="1.1"/><path d="M2.3 0.9L13.9 12.5" stroke="#0c0c60" stroke-width="1.2"/></svg><div class="a" style="left:1000.30px;top:490px;line-height:14px;white-space:nowrap;letter-spacing:0.107px;color:#000;font-size:12px">Port Allocations</div><div class="a" style="left:966px;top:510px;width:264px;height:1px;background:#a8a8a8"></div><div class="a" style="left:966px;top:512px;width:264px;height:21px;background:#f0f0f0;border-top:1px solid #dcdcdc"></div><svg class="a" style="left:969px;top:517px" width="16" height="13" viewBox="0 0 16 13"><path d="M0.5 2.5v9h12l3-6h-12l-3 6" fill="#f8dc90" stroke="#c09a40"/><path d="M0.5 2.5v-1h4l1 1h6v3" fill="#f0d080" stroke="#c09a40"/></svg><div class="a" style="left:987.10px;top:516px;line-height:14px;white-space:nowrap;letter-spacing:-0.218px;color:#000;font-size:12px">Accelerators</div><svg class="a" style="left:1216px;top:520px" width="12" height="8" viewBox="0 0 12 8"><path d="M1.3 3.5L4.5 0.6L6.5 2.6L8.4 0.6L10.7 2.7V4.3L8.4 6.5L6.5 4.5L4.5 6.5Z" fill="#fff" stroke="#666" stroke-width="1"/></svg><svg class="a" style="left:982px;top:539px" width="17" height="14" viewBox="0 0 17 14"><rect x="0.5" y="2.5" width="15" height="9" rx="1.5" fill="#f4f4f4" stroke="#555"/><text x="3.5" y="10" font-family="Liberation Sans" font-weight="bold" font-size="8" fill="#111">M</text></svg><div class="a" style="left:1000.20px;top:539px;line-height:14px;white-space:nowrap;letter-spacing:0.096px;color:#000;font-size:12px">Functions from Mode / State</div><svg class="a" style="left:982px;top:562px" width="17" height="14" viewBox="0 0 17 14"><path d="M1.5 1v12M5.5 1v12M15.5 4v9M1.5 2.5h4M5.5 7.5h10M5.5 11.5h10" fill="none" stroke="#111"/></svg><div class="a" style="left:1000.20px;top:562px;line-height:14px;white-space:nowrap;letter-spacing:-0.129px;color:#000;font-size:12px">Elements from Scenario</div><div class="a" style="left:966px;top:582px;width:264px;height:1px;background:#a8a8a8"></div><div class="a" style="left:966px;top:584px;width:264px;height:21px;background:#f0f0f0;border-top:1px solid #dcdcdc"></div><svg class="a" style="left:969px;top:589px" width="16" height="13" viewBox="0 0 16 13"><path d="M0.5 2.5v9h12l3-6h-12l-3 6" fill="#f8dc90" stroke="#c09a40"/><path d="M0.5 2.5v-1h4l1 1h6v3" fill="#f0d080" stroke="#c09a40"/></svg><div class="a" style="left:987.10px;top:588px;line-height:14px;white-space:nowrap;letter-spacing:0.440px;color:#000;font-size:12px">Common</div><svg class="a" style="left:1216px;top:592px" width="12" height="8" viewBox="0 0 12 8"><path d="M1.3 3.5L4.5 0.6L6.5 2.6L8.4 0.6L10.7 2.7V4.3L8.4 6.5L6.5 4.5L4.5 6.5Z" fill="#fff" stroke="#666" stroke-width="1"/></svg><svg class="a" style="left:982px;top:611px" width="17" height="14" viewBox="0 0 17 14"><text x="0" y="11" font-family="Liberation Sans" font-size="11" fill="#111">{c}</text></svg><div class="a" style="left:1001.40px;top:611px;line-height:14px;white-space:nowrap;letter-spacing:-0.056px;color:#000;font-size:12px">Constraint</div><svg class="a" style="left:982px;top:634px" width="17" height="14" viewBox="0 0 17 14"><path d="M0 7.5h12" stroke="#111" stroke-dasharray="1 1"/><path d="M10 4.5l3.5 3-3.5 3" fill="none" stroke="#111" stroke-width="1.1"/></svg><div class="a" style="left:1001.40px;top:634px;line-height:14px;white-space:nowrap;letter-spacing:-0.087px;color:#000;font-size:12px">ConstraintElement</div><svg class="a" style="left:982px;top:657px" width="17" height="14" viewBox="0 0 17 14"><ellipse cx="8.5" cy="7.4" rx="3.2" ry="3.3" fill="#a8ccf0" stroke="#2a48a0" stroke-width="1.1"/><path d="M2.3 0.9L13.9 12.5" stroke="#0c0c60" stroke-width="1.2"/></svg><div class="a" style="left:1001.40px;top:657px;line-height:14px;white-space:nowrap;letter-spacing:-0.160px;color:#000;font-size:12px">Constraints</div><svg class="a" style="left:973px;top:684px" width="5" height="8" viewBox="0 0 5 8"><path d="M0.5 1.5l4 3-4 3z" fill="#707070"/></svg><svg class="a" style="left:982px;top:680px" width="17" height="14" viewBox="0 0 17 14"><ellipse cx="8.5" cy="7.4" rx="3.2" ry="3.3" fill="#a8ccf0" stroke="#2a48a0" stroke-width="1.1"/><path d="M2.3 0.9L13.9 12.5" stroke="#0c0c60" stroke-width="1.2"/></svg><div class="a" style="left:1001.40px;top:680px;line-height:14px;white-space:nowrap;letter-spacing:-0.136px;color:#000;font-size:12px">Applied Property Value Groups</div><svg class="a" style="left:973px;top:707px" width="5" height="8" viewBox="0 0 5 8"><path d="M0.5 1.5l4 3-4 3z" fill="#707070"/></svg><svg class="a" style="left:982px;top:703px" width="17" height="14" viewBox="0 0 17 14"><rect x="1.5" y="0.5" width="12" height="12" fill="#fff" stroke="#3a3a70"/><path d="M1.5 4.5h12M1.5 8.5h12M5.5 0.5v12M9.5 0.5v12" stroke="#3a3a70"/></svg><div class="a" style="left:1001.40px;top:703px;line-height:14px;white-space:nowrap;letter-spacing:-0.050px;color:#000;font-size:12px">Title Block</div><svg class="a" style="left:982px;top:726px" width="17" height="14" viewBox="0 0 17 14"><ellipse cx="8.5" cy="7.4" rx="3.2" ry="3.3" fill="#a8ccf0" stroke="#2a48a0" stroke-width="1.1"/><path d="M2.3 0.9L13.9 12.5" stroke="#0c0c60" stroke-width="1.2"/></svg><div class="a" style="left:1001.40px;top:726px;line-height:14px;white-space:nowrap;letter-spacing:-0.145px;color:#000;font-size:12px">Title Blocks</div><div class="a" style="left:1230px;top:21px;width:1px;height:771px;background:#d0d0d0"></div><div class="a" style="left:966px;top:791px;width:265px;height:1px;background:#d0d0d0"></div><svg class="a" style="left:1234px;top:28px" width="15" height="13" viewBox="0 0 15 13"><rect x="0" y="0" width="15" height="3" fill="#8090b8"/><rect x="0" y="8" width="15" height="3" fill="#8090b8"/><path d="M5 3l-3 3.5 3 3.5M10 3l3 3.5-3 3.5" fill="none" stroke="#000" stroke-width="1.8"/></svg><svg class="a" style="left:1234px;top:48px" width="15" height="14" viewBox="0 0 15 14"><rect x="5" y="2" width="10" height="3" fill="#8090b8"/><rect x="5" y="7" width="10" height="3" fill="#8090b8"/><rect x="0" y="11" width="15" height="3" fill="#8090b8"/><circle cx="5" cy="2" r="1.5" fill="#203080"/><rect x="3.5" y="5" width="3" height="7" fill="#203080"/></svg><svg class="a" style="left:1234px;top:69px" width="15" height="14" viewBox="0 0 15 14"><rect x="2" y="4" width="13" height="3" fill="#8090b8"/><rect x="2" y="10" width="13" height="3" fill="#8090b8"/><path d="M2 2c5 0 7 3 7 8M11 8l-2 3-2-3" fill="none" stroke="#203080" stroke-width="1.5"/><rect x="4" y="9" width="4" height="4" fill="#203080"/></svg><svg class="a" style="left:1234px;top:91px" width="15" height="16" viewBox="0 0 15 16"><circle cx="6" cy="6" r="5.5" fill="#f0a040" stroke="#c06010"/><path d="M3 3l6 6M9 3l-6 6" stroke="#fff" stroke-width="1.5"/><rect x="6" y="9" width="9" height="6" fill="#eef4f8" stroke="#a0b0c0" stroke-width=".6"/><rect x="4" y="11" width="2" height="2" fill="#203080"/></svg><svg class="a" style="left:950px;top:48px" width="9" height="7" viewBox="0 0 9 7"><path d="M0.5 6.5l4-6 4 6z" fill="#a0a0a0"/></svg><svg class="a" style="left:950px;top:764px" width="9" height="7" viewBox="0 0 9 7"><path d="M0.5 0.5l4 6 4-6z" fill="#a0a0a0"/></svg><div class="a" style="left:182px;top:783px;width:650px;height:2px;background:#858585"></div><div class="a" style="left:0;top:792px;width:1249px;height:19px;background:#f0f0f0;border-top:1px solid #dcdcdc"></div><svg class="a" style="left:817px;top:799px" width="3" height="10" viewBox="0 0 3 10"><rect x="0" y="0" width="2" height="2" fill="#c8c8b8"/><rect x="0" y="4" width="2" height="2" fill="#c8c8b8"/><rect x="0" y="8" width="2" height="2" fill="#c8c8b8"/></svg><div class="a" style="left:821px;top:795px;width:130px;height:16px;background:#fff;border-top:1px solid #a0a0a0;border-right:1px solid #d8d8d8"></div><div class="a" style="left:821px;top:796px;width:108px;height:15px;background:#a3a3a3"></div><div class="a" style="left:847.00px;top:798px;line-height:14px;white-space:nowrap;letter-spacing:-0.250px;color:#000;font-size:12px">832M of 1000M</div><div class="a" style="left:951px;top:795px;width:16px;height:16px;background:#fff;border-top:1px solid #a0a0a0"></div><svg class="a" style="left:953px;top:798px" width="13" height="13" viewBox="0 0 13 13"><rect x="1" y="1" width="11" height="1.5" fill="#6080a0"/><rect x="5" y="0" width="3" height="1" fill="#6080a0"/><rect x="2.5" y="3.5" width="8" height="9.5" fill="#b8d8f8" stroke="#5070a0"/><path d="M5 4v9M8 4v9" stroke="#5070a0"/></svg><svg class="a" style="left:969px;top:799px" width="3" height="10" viewBox="0 0 3 10"><rect x="0" y="0" width="2" height="2" fill="#c8c8b8"/><rect x="0" y="4" width="2" height="2" fill="#c8c8b8"/><rect x="0" y="8" width="2" height="2" fill="#c8c8b8"/></svg>
</body></html>
